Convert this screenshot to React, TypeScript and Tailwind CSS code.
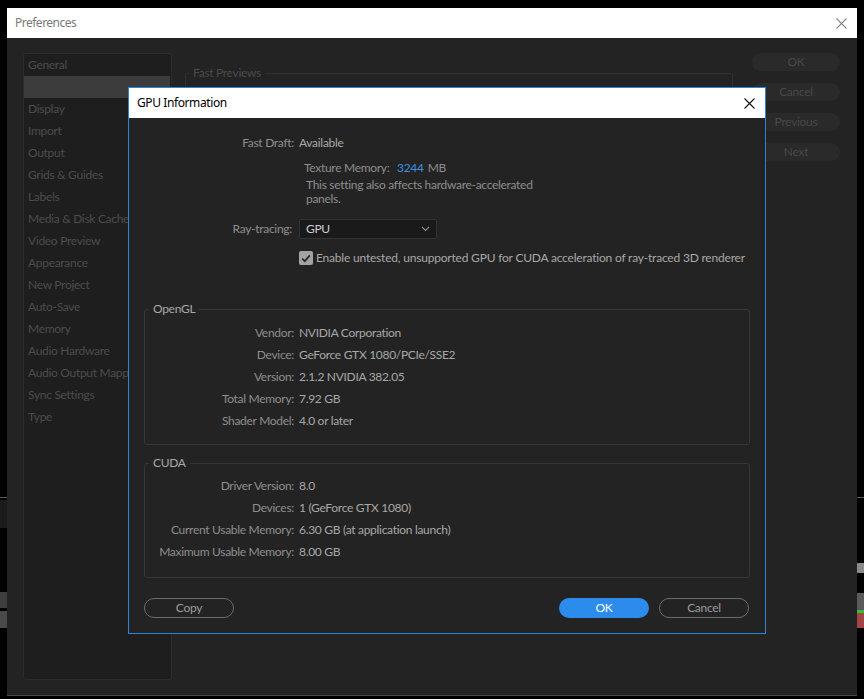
import type { ReactNode } from "react";

const sidebarItems = [
  "General",
  "",
  "Display",
  "Import",
  "Output",
  "Grids & Guides",
  "Labels",
  "Media & Disk Cache",
  "Video Preview",
  "Appearance",
  "New Project",
  "Auto-Save",
  "Memory",
  "Audio Hardware",
  "Audio Output Mapping",
  "Sync Settings",
  "Type"
];

const sideButtons = ["OK", "Cancel", "Previous", "Next"];

const openGlRows: [string, string][] = [
  ["Vendor:", "NVIDIA Corporation"],
  ["Device:", "GeForce GTX 1080/PCIe/SSE2"],
  ["Version:", "2.1.2 NVIDIA 382.05"],
  ["Total Memory:", "7.92 GB"],
  ["Shader Model:", "4.0 or later"]
];

const cudaRows: [string, string][] = [
  ["Driver Version:", "8.0"],
  ["Devices:", "1 (GeForce GTX 1080)"],
  ["Current Usable Memory:", "6.30 GB (at application launch)"],
  ["Maximum Usable Memory:", "8.00 GB"]
];

function CloseIcon({ color }: { color: string }) {
  return (
    <svg width="11" height="11" viewBox="0 0 11 11">
      <path d="M0.5 0.5 L10.5 10.5 M10.5 0.5 L0.5 10.5" stroke={color} strokeWidth="1.1" />
    </svg>
  );
}

function InfoRow({ label, children, labelWidth }: { label: string; children: ReactNode; labelWidth: string }) {
  return (
    <div className="flex h-[22px] items-center whitespace-nowrap">
      <span className={`${labelWidth} shrink-0 text-right text-[#8e8e8e]`}>{label}</span>
      <span className="ml-[5px] text-[#a8a8a8]">{children}</span>
    </div>
  );
}

function InfoGroup({ title, rows, className }: { title: string; rows: [string, string][]; className: string }) {
  return (
    <fieldset className={`rounded-[3px] border border-[#363636] ${className}`}>
      <legend className="ml-[4px] px-[4px] text-[12px] leading-[16px] text-[#a8a8a8]">{title}</legend>
      {rows.map(([label, value]) => (
        <InfoRow key={label} label={label} labelWidth="w-[149px]">
          {value}
        </InfoRow>
      ))}
    </fieldset>
  );
}

function GpuDialog() {
  return (
    <div className="absolute left-[128px] top-[87px] flex h-[547px] w-[638px] flex-col border border-[#2a84d8] bg-[#232323] text-[12px] tracking-[-0.3px] font-['Lato',sans-serif]">
      <div className="flex h-[30px] shrink-0 items-center justify-between bg-white pl-[8px] pr-[10px]">
        <span className="font-['Noto_Sans',sans-serif] text-[12px] tracking-[-0.4px] text-black">GPU Information</span>
        <CloseIcon color="#111" />
      </div>
      <div className="flex flex-col px-[15px] pt-[14px]">
        <InfoRow label="Fast Draft:" labelWidth="w-[150px]">
          Available
        </InfoRow>
        <div className="ml-[160px] mt-[3px] flex h-[22px] items-center">
          <span className="w-[93px] text-[#8e8e8e]">Texture Memory:</span>
          <span className="text-[#3d8fe2]">3244</span>
          <span className="ml-[4px] text-[#8e8e8e]">MB</span>
        </div>
        <p className="-mt-[1px] ml-[162px] text-[12px] leading-[14px] text-[#8e8e8e]">
          This setting also affects hardware-accelerated
          <br />
          panels.
        </p>
        <div className="mt-[13px] flex h-[20px] items-center">
          <span className="w-[148px] shrink-0 text-right text-[#8e8e8e]">Ray-tracing:</span>
          <div className="ml-[7px] flex h-[20px] w-[138px] items-center justify-between rounded-[2px] border border-[#323232] bg-[#1a1a1a] pl-[6px] pr-[6px]">
            <span className="text-[#cfcfcf]">GPU</span>
            <svg width="9" height="6" viewBox="0 0 9 6">
              <path d="M1 1 L4.5 4.5 L8 1" fill="none" stroke="#8a8a8a" strokeWidth="1.2" />
            </svg>
          </div>
        </div>
        <div className="mt-[9px] flex h-[20px] items-center whitespace-nowrap pl-[155px]">
          <span className="flex h-[14px] w-[14px] shrink-0 items-center justify-center rounded-[2px] bg-[#a3a3a3]">
            <svg width="10" height="9" viewBox="0 0 10 9">
              <path d="M1.2 4.6 L3.8 7.2 L8.8 1.4" fill="none" stroke="#2a2a2a" strokeWidth="1.8" />
            </svg>
          </span>
          <span className="ml-[3px] tracking-[-0.2px] text-[#a8a8a8]">
            Enable untested, unsupported GPU for CUDA acceleration of ray-traced 3D renderer
          </span>
        </div>
        <InfoGroup title="OpenGL" rows={openGlRows} className="mt-[33px] pb-[12px] pt-[5px]" />
        <InfoGroup title="CUDA" rows={cudaRows} className="mt-[10px] pb-[14px] pt-[4px]" />
        <div className="mt-[20px] flex h-[20px] items-center">
          <button className="h-[20px] w-[90px] rounded-full border border-[#6b6b6b] text-[#9c9c9c]">Copy</button>
          <button className="ml-auto h-[20px] w-[90px] rounded-full bg-[#2d8ceb] text-white">OK</button>
          <button className="ml-[10px] mr-[1px] h-[20px] w-[90px] rounded-full border border-[#6b6b6b] text-[#9c9c9c]">
            Cancel
          </button>
        </div>
      </div>
    </div>
  );
}

export default function App() {
  return (
    <div className="relative h-[699px] w-[864px] overflow-hidden bg-black pl-[7px] pt-[8px] font-['Lato',sans-serif]">
      {/* bits of the app behind the window */}
      <div className="absolute left-0 top-[497px] h-[1px] w-[7px] bg-[#5a5a5a]" />
      <div className="absolute left-0 top-[500px] h-[28px] w-[7px] bg-[#1b1b1b]" />
      <div className="absolute left-0 top-[592px] h-[16px] w-[7px] bg-[#3e3e3e]" />
      <div className="absolute left-0 top-[611px] h-[17px] w-[7px] bg-[#4a4a4a]" />
      <div className="absolute right-0 top-[497px] h-[1px] w-[7px] bg-[#5a5a5a]" />
      <div className="absolute right-0 top-[563px] h-[10px] w-[7px] bg-[#8a8a8a]" />
      <div className="absolute right-0 top-[593px] h-[17px] w-[7px] bg-[#5a5a5a]" />
      <div className="absolute right-0 top-[610px] h-[3px] w-[7px] bg-[#2fbf3a]" />
      <div className="absolute right-0 top-[613px] h-[15px] w-[7px] bg-[#a34545]" />

      <div className="flex h-[688px] w-[850px] flex-col border-b border-[#4c4c4c]">
        <div className="flex h-[30px] shrink-0 items-center justify-between bg-white pl-[8px] pr-[10px]">
          <span className="font-['Noto_Sans',sans-serif] text-[12px] tracking-[-0.5px] text-[#7a7a7a]">Preferences</span>
          <CloseIcon color="#8a8a8a" />
        </div>
        <div className="flex flex-1 items-start bg-[#232323] pl-[16px] pt-[15px] text-[12px] tracking-[-0.3px]">
          <div className="h-[627px] w-[149px] shrink-0 overflow-hidden rounded-[3px] border border-[#2c2c2c] bg-[#1e1e1e]">
            {sidebarItems.map((item, index) => (
              <div
                key={index}
                className={`h-[22px] whitespace-nowrap pl-[4px] leading-[22px] text-[#4c4c4c] ${index === 1 ? "mr-[1px] bg-[#3c3c3c]" : ""}`}
              >
                {item}
              </div>
            ))}
          </div>
          <fieldset className="ml-[13px] mt-[12px] h-[120px] w-[548px] rounded-[3px] border border-[#303030]">
            <legend className="ml-[3px] px-[4px] leading-[16px] text-[#4a4a4a]">Fast Previews</legend>
          </fieldset>
          <div className="ml-[19px] flex flex-col gap-[12px]">
            {sideButtons.map((label) => (
              <div key={label} className="h-[18px] w-[88px] rounded-full bg-[#2a2a2a] text-center leading-[18px] text-[#484848]">
                {label}
              </div>
            ))}
          </div>
        </div>
      </div>

      <GpuDialog />
    </div>
  );
}
